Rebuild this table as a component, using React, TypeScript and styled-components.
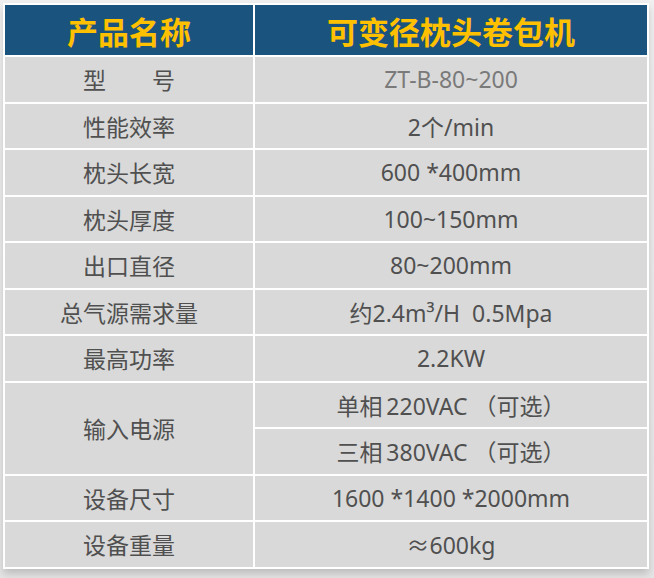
import React from "react";
import styled, { createGlobalStyle } from "styled-components";

const GlobalStyle = createGlobalStyle`
  html, body {
    margin: 0;
    padding: 0;
    background: #ebebeb;
  }
  body {
    font-family: "Noto Sans", "Noto Sans CJK SC", sans-serif;
  }
`;

const Page = styled.div`
  width: 654px;
  height: 578px;
  padding: 3px 0 0 3px;
  box-sizing: border-box;
  background: linear-gradient(180deg, #f0f0f0 0%, #e6e6e6 100%);
`;

const Table = styled.div`
  width: 646px;
  box-sizing: border-box;
  display: grid;
  grid-template-columns: 248px 1fr;
  grid-template-rows: 50px repeat(11, 44.5px);
  gap: 2px;
  padding: 2px;
  background: #ffffff;
  box-shadow: 0 5px 8px rgba(0, 0, 0, 0.18);
`;

const HeadCell = styled.div`
  background: #1a537e;
  color: #ffc000;
  font-family: "Noto Sans CJK SC", sans-serif;
  font-size: 31px;
  font-weight: 700;
  display: flex;
  align-items: center;
  justify-content: center;
`;

const Cell = styled.div<{ $span?: number; $light?: boolean }>`
  background: #d9d9d9;
  color: ${(p) => (p.$light ? "#7a7a7a" : "#505050")};
  font-size: 23px;
  display: flex;
  align-items: center;
  justify-content: center;
  white-space: pre;
  ${(p) => (p.$span ? `grid-row: span ${p.$span};` : "")}
`;

const rows: { label: string; values: string[]; light?: boolean }[] = [
  { label: "型　　号", values: ["ZT-B-80~200"], light: true },
  { label: "性能效率", values: ["2个/min"] },
  { label: "枕头长宽", values: ["600 *400mm"] },
  { label: "枕头厚度", values: ["100~150mm"] },
  { label: "出口直径", values: ["80~200mm"] },
  { label: "总气源需求量", values: ["约2.4m³/H  0.5Mpa"] },
  { label: "最高功率", values: ["2.2KW"] },
  { label: "输入电源", values: ["单相\u2009220VAC （可选）", "三相\u2009380VAC （可选）"] },
  { label: "设备尺寸", values: ["1600 *1400 *2000mm"] },
  { label: "设备重量", values: ["≈600kg"] },
];

export default function App() {
  return (
    <>
      <GlobalStyle />
      <Page>
        <Table>
          <HeadCell>产品名称</HeadCell>
          <HeadCell>可变径枕头卷包机</HeadCell>
          {rows.map((r) => (
            <React.Fragment key={r.label}>
              <Cell $span={r.values.length > 1 ? r.values.length : undefined}>{r.label}</Cell>
              {r.values.map((v) => (
                <Cell key={v} $light={r.light}>
                  {v}
                </Cell>
              ))}
            </React.Fragment>
          ))}
        </Table>
      </Page>
    </>
  );
}
